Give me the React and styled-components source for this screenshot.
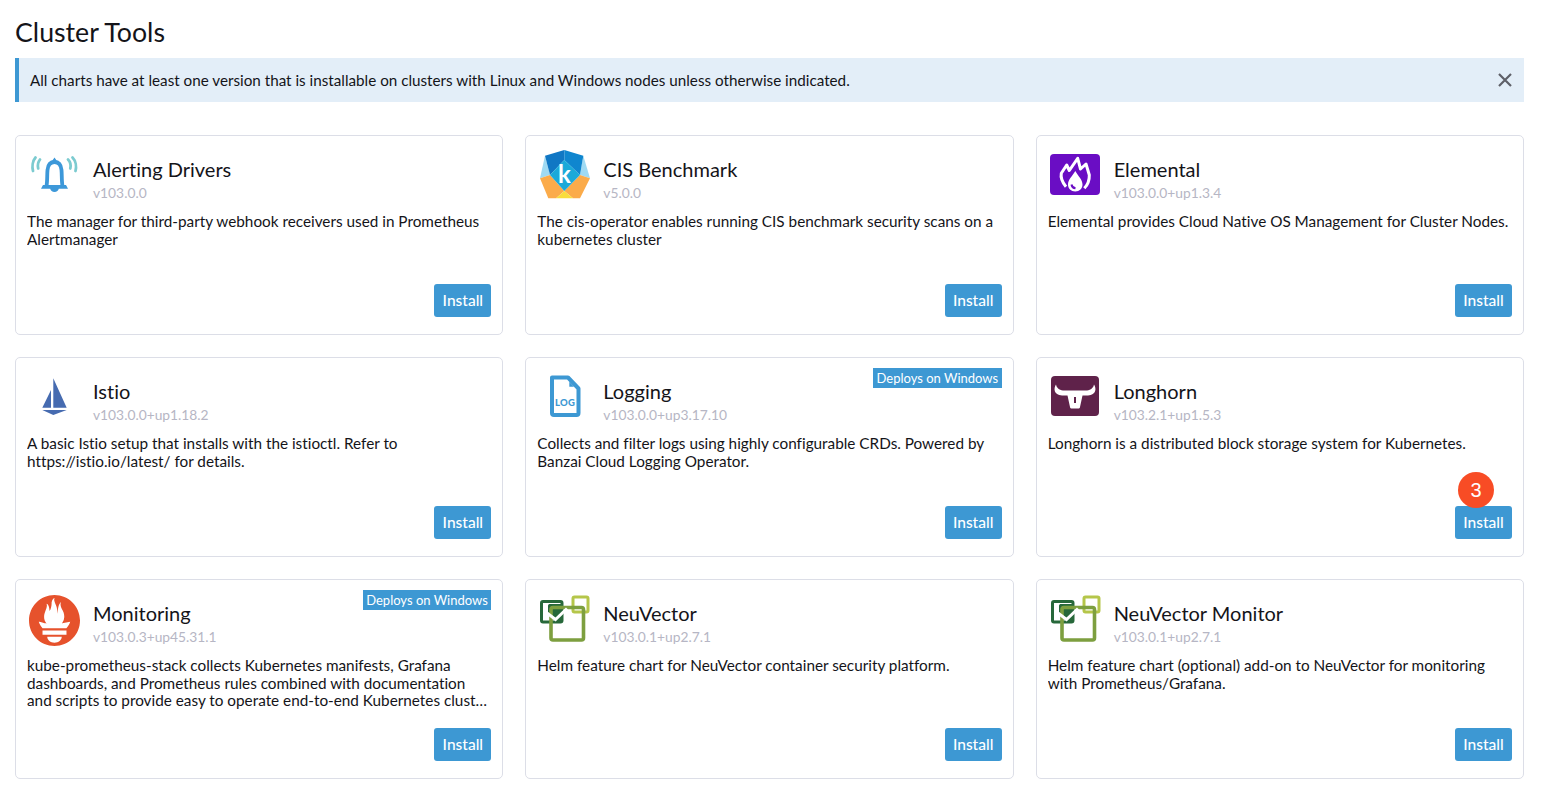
import React from "react";
import styled, { createGlobalStyle } from "styled-components";
import { SiPrometheus } from "react-icons/si";

const GlobalStyle = createGlobalStyle`
  html, body {
    margin: 0;
    background: #fff;
    color: #141419;
    font-family: Lato, "Liberation Sans", sans-serif;
    font-variant-ligatures: none;
  }
`;

const Page = styled.div`
  width: 1509px;
  padding: 0 19px 19px 15px;
`;

const Title = styled.h1`
  margin: 0;
  height: 58px;
  font-size: 26.7px;
  font-weight: 400;
  line-height: 65px;
`;

const Banner = styled.div`
  display: flex;
  align-items: center;
  justify-content: space-between;
  height: 44px;
  box-sizing: border-box;
  padding: 0 12px 0 11px;
  border-left: 4px solid #3d98d3;
  background: #e3eef8;
  font-size: 15.22px;
`;

const CloseButton = styled.svg`
  width: 14px;
  height: 14px;
  stroke: #5f6068;
  stroke-width: 2.2;
  fill: none;
`;

const Grid = styled.div`
  display: grid;
  grid-template-columns: repeat(3, 1fr);
  grid-auto-rows: 200px;
  gap: 22px;
  margin-top: 33px;
`;

const Card = styled.div`
  position: relative;
  display: flex;
  flex-direction: column;
  box-sizing: border-box;
  padding: 13px 11px 17px;
  border: 1px solid #dcdee7;
  border-radius: 5px;
`;

const Header = styled.div`
  display: flex;
  height: 64px;
  flex-shrink: 0;
`;

const LogoBox = styled.div`
  width: 50px;
  height: 50px;
  margin: 0 13px 0 3px;
  flex-shrink: 0;

  svg {
    display: block;
    overflow: visible;
  }
`;

const Name = styled.div`
  font-size: 20px;
  line-height: 26px;
  margin-top: 7px;
`;

const Version = styled.div`
  font-size: 13.8px;
  line-height: 18px;
  margin-top: 2px;
  color: #b6b6c4;
`;

const Description = styled.div`
  font-size: 15.3px;
  line-height: 17.5px;
  display: -webkit-box;
  -webkit-box-orient: vertical;
  -webkit-line-clamp: 3;
  overflow: hidden;
`;

const Footer = styled.div`
  position: relative;
  display: flex;
  justify-content: flex-end;
  margin-top: auto;
`;

const InstallButton = styled.button`
  width: 57px;
  height: 33px;
  padding: 0 0 2px;
  border: 0;
  border-radius: 3px;
  background: #3d98d3;
  color: #fff;
  font-family: inherit;
  font-size: 15.5px;
  font-weight: 500;
`;

const WindowsTag = styled.span`
  position: absolute;
  top: 10px;
  right: 11px;
  padding: 0 3.5px;
  background: #3d98d3;
  color: #fff;
  font-size: 13px;
  line-height: 20px;
`;

const CountBadge = styled.span`
  position: absolute;
  top: -34px;
  right: 18px;
  width: 36px;
  height: 36px;
  border-radius: 50%;
  background: #f84c25;
  color: #fff;
  font-family: "Liberation Sans", sans-serif;
  font-size: 20px;
  line-height: 36px;
  text-align: center;
`;

const Logo = ({ children }) => (
  <svg width="50" height="50" viewBox="0 0 50 50">
    {children}
  </svg>
);

const BellLogo = () => (
  <Logo>
    <g fill="none" stroke="#7ccbd0" strokeWidth="2.800" strokeLinecap="round">
      <path d="M5.500 8.500C2.500 12 2 18 3 22" />
      <path d="M10 10.500C8 13 7.500 16.500 8.200 19.500" />
      <path d="M42.500 8.500C46 12 46.500 18 45.500 22" />
      <path d="M38 10.500C40.500 13 41 16.500 40.300 19.500" />
    </g>
    <path
      d="M16.500 37C17.500 32 17 26 17.500 21C18 15.500 20.500 13 24.500 13C28.500 13 31 15.500 31.500 21C32 26 31.500 32 32.500 37"
      fill="none"
      stroke="#3d98d9"
      strokeWidth="3.800"
    />
    <path
      d="M24.500 8.500l3.500 5h-7zM13 36h23l2 3.800H11zM20.200 39.800h8.600c-.4 2-2 3.200-4.300 3.200S20.600 41.800 20.200 39.800z"
      fill="#3d98d9"
    />
  </Logo>
);

const CisLogo = () => (
  <Logo>
    <polygon points="5,6.700 10,26 0,29.300" fill="#9fdaf3" />
    <polygon points="43.300,6.700 40,26 50,29.300" fill="#9fdaf3" />
    <polygon points="5,6.700 24.300,1 24.300,11 10,26" fill="#1077c4" />
    <polygon points="43.300,6.700 24.300,1 24.300,11 40,26" fill="#0f86cf" />
    <polygon points="0,29.300 10,26 24.300,42 16,49.300 8.300,49.300" fill="#fbab4a" />
    <polygon points="50,29.300 40,26 24.300,42 33,49.300 40,49.300" fill="#fbab4a" />
    <polygon points="24.300,42 16,49.300 33,49.300" fill="#f9dc3c" />
    <polygon points="24.300,11 10,26 24.300,42 40,26" fill="#1ba9d9" />
    <text
      x="24.500"
      y="34"
      fill="#fff"
      fontFamily="Lato, sans-serif"
      fontSize="24"
      fontWeight="700"
      textAnchor="middle"
    >
      k
    </text>
  </Logo>
);

const ElementalLogo = () => (
  <Logo>
    <rect x="-1" y="5" width="50" height="41" rx="4" fill="#6a0dc4" />
    <path
      d="M15 37.700C11 33 9.500 28.500 10.300 24.300L15.700 16L18.300 21.500L26.700 9.300L29.500 20L35 15L38.300 26C38.500 31 36.500 36 33.300 39.300"
      fill="none"
      stroke="#fff"
      strokeWidth="3"
      strokeLinejoin="round"
    />
    <path
      d="M24.300 22C27 27 31.500 30.500 31.500 35.500C31.500 39.500 28.500 42.500 24.300 42.500C20 42.500 17 39.500 17 35.500C17 30.500 21.500 27 24.300 22Z"
      fill="#fff"
    />
    <path d="M20.500 35.500c.3 2.300 1.800 3.500 4 3.800" fill="none" stroke="#6a0dc4" strokeWidth="2" />
  </Logo>
);

const IstioLogo = () => (
  <Logo>
    <path
      d="M23.300 7.300L36.700 36.700H23.300ZM21 19V36.700H12.300ZM12.300 39H36.700L23.300 44Z"
      fill="#466bb0"
    />
  </Logo>
);

const LogLogo = () => (
  <Logo>
    <path
      d="M12 6.500H28L38.500 17.500V42C38.500 43.200 37.700 44 36.500 44H14C12.800 44 12 43.200 12 42Z"
      fill="none"
      stroke="#3d98d3"
      strokeWidth="4"
      strokeLinejoin="round"
    />
    <polygon points="29.300,10.700 34,15.700 29.300,15.700" fill="#3d98d3" />
    <text
      x="25"
      y="34.500"
      fill="#3d98d3"
      fontFamily="Lato, sans-serif"
      fontSize="9.500"
      fontWeight="900"
      letterSpacing=".3"
      textAnchor="middle"
    >
      LOG
    </text>
  </Logo>
);

const LonghornLogo = () => (
  <Logo>
    <rect x="0" y="5" width="48" height="40" rx="4" fill="#5f224a" />
    <path
      d="M5 13.500C5.500 16.500 8 19 12 19.500H36C40 19 42.500 16.500 43 13.500C45.500 17 45.500 24 37 24.500H31.500L29 36C29 37 28 37.500 27 37.500H21C20 37.500 19 37 19 36L16.500 24.500H11C2.500 24 2.500 17 5 13.500Z"
      fill="#fff"
    />
    <rect x="23" y="26" width="2" height="6" fill="#5f224a" />
  </Logo>
);

const PrometheusIcon = styled(SiPrometheus)`
  margin: 2px 0 0 -1px;
`;

const PrometheusLogo = () => <PrometheusIcon size={51} color="#e6522c" />;

const NeuVectorLogo = () => (
  <Logo>
    <rect x="33" y="4" width="15" height="15" rx="1.500" fill="none" stroke="#b5c64a" strokeWidth="3" />
    <rect x="1.500" y="8.500" width="20.500" height="20.500" rx="1.500" fill="#fff" stroke="#27683a" strokeWidth="3" />
    <path d="M8 12.500C8 11.500 9 11 10 11H22V29H16L8 22Z" fill="#27683a" />
    <rect x="11" y="14.500" width="32.500" height="32.500" rx="2" fill="none" stroke="#7d9f3f" strokeWidth="3.600" />
    <polyline points="7,20 15.500,26.500 27,15.500" fill="none" stroke="#fff" strokeWidth="3" />
  </Logo>
);

const charts = [
  {
    name: "Alerting Drivers",
    version: "v103.0.0",
    logo: BellLogo,
    description:
      "The manager for third-party webhook receivers used in Prometheus Alertmanager",
  },
  {
    name: "CIS Benchmark",
    version: "v5.0.0",
    logo: CisLogo,
    description:
      "The cis-operator enables running CIS benchmark security scans on a kubernetes cluster",
  },
  {
    name: "Elemental",
    version: "v103.0.0+up1.3.4",
    logo: ElementalLogo,
    description: "Elemental provides Cloud Native OS Management for Cluster Nodes.",
  },
  {
    name: "Istio",
    version: "v103.0.0+up1.18.2",
    logo: IstioLogo,
    description:
      "A basic Istio setup that installs with the istioctl. Refer to https://istio.io/latest/ for details.",
  },
  {
    name: "Logging",
    version: "v103.0.0+up3.17.10",
    logo: LogLogo,
    windows: true,
    description:
      "Collects and filter logs using highly configurable CRDs. Powered by Banzai Cloud Logging Operator.",
  },
  {
    name: "Longhorn",
    version: "v103.2.1+up1.5.3",
    logo: LonghornLogo,
    badge: 3,
    description: "Longhorn is a distributed block storage system for Kubernetes.",
  },
  {
    name: "Monitoring",
    version: "v103.0.3+up45.31.1",
    logo: PrometheusLogo,
    windows: true,
    description:
      "kube-prometheus-stack collects Kubernetes manifests, Grafana dashboards, and Prometheus rules combined with documentation and scripts to provide easy to operate end-to-end Kubernetes cluster monitoring with the Prometheus Operator.",
  },
  {
    name: "NeuVector",
    version: "v103.0.1+up2.7.1",
    logo: NeuVectorLogo,
    description: "Helm feature chart for NeuVector container security platform.",
  },
  {
    name: "NeuVector Monitor",
    version: "v103.0.1+up2.7.1",
    logo: NeuVectorLogo,
    description:
      "Helm feature chart (optional) add-on to NeuVector for monitoring with Prometheus/Grafana.",
  },
];

export default function App() {
  return (
    <Page>
      <GlobalStyle />
      <Title>Cluster Tools</Title>
      <Banner>
        All charts have at least one version that is installable on clusters with Linux and Windows nodes unless otherwise indicated.
        <CloseButton viewBox="0 0 14 14">
          <path d="M1 1L13 13M13 1L1 13" />
        </CloseButton>
      </Banner>
      <Grid>
        {charts.map(chart => (
          <Card key={chart.name}>
            {chart.windows && <WindowsTag>Deploys on Windows</WindowsTag>}
            <Header>
              <LogoBox>
                <chart.logo />
              </LogoBox>
              <div>
                <Name>{chart.name}</Name>
                <Version>{chart.version}</Version>
              </div>
            </Header>
            <Description>{chart.description}</Description>
            <Footer>
              {chart.badge && <CountBadge>{chart.badge}</CountBadge>}
              <InstallButton>Install</InstallButton>
            </Footer>
          </Card>
        ))}
      </Grid>
    </Page>
  );
}
